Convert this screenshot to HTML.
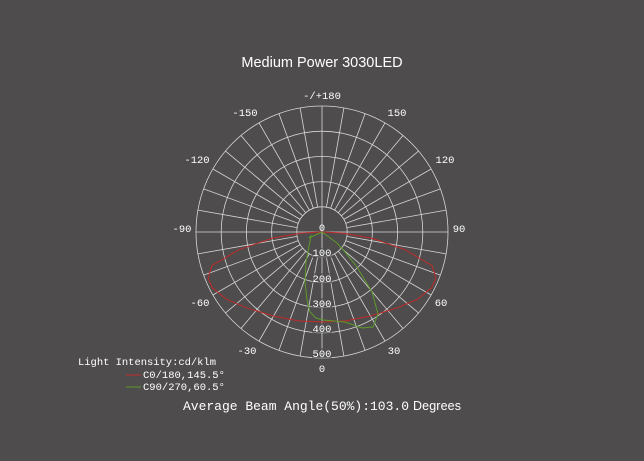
<!DOCTYPE html><html><head><style>
body{margin:0;background:#4e4c4c;width:644px;height:461px;overflow:hidden}
svg{display:block}
.m{font-family:"Liberation Mono",monospace;font-size:10.5px;fill:#fff}
</style></head><body>
<svg id="s" width="644" height="461" xmlns="http://www.w3.org/2000/svg">
<rect width="644" height="461" fill="#4e4c4c"/>
<text x="322" y="67" text-anchor="middle" font-family="Liberation Sans,sans-serif" font-size="14.5" fill="#fff">Medium Power 3030LED</text>
<g id="grid" stroke="#d8d8d8" stroke-width="0.8" fill="none"></g>
<g class="m" text-anchor="middle">
<text x="322" y="99">-/+180</text>
<text x="397" y="116">150</text><text x="245" y="116">-150</text>
<text x="445" y="163">120</text><text x="197" y="163">-120</text>
<text x="459" y="232">90</text><text x="182" y="232">-90</text>
<text x="441" y="306">60</text><text x="200" y="306">-60</text>
<text x="394" y="354">30</text><text x="247" y="354">-30</text>
<text x="322" y="372">0</text>
</g>
<path fill="none" stroke="#c02a2a" stroke-width="1" id="red"/>
<path fill="none" stroke="#5c9a2a" stroke-width="1" d="M322,232 L309,238 L311,236 L306,262 L305,282 L307,300 L310,312 L316,318 L323,320 L345,322 L362,328 L373,327 L378,314 L372,292 L357,267 L345,252 L337,243 L322,232"/>
<g fill="#4e4c4c" opacity="0.6">
<rect x="312" y="248" width="20" height="10"/><rect x="312" y="273" width="20" height="10"/><rect x="312" y="298" width="20" height="10"/><rect x="312" y="323" width="20" height="10"/><rect x="312" y="348" width="20" height="10"/>
</g>
<g class="m" text-anchor="middle">
<text x="322" y="231">0</text><text x="322" y="256">100</text><text x="322" y="282">200</text><text x="322" y="307">300</text><text x="322" y="332">400</text><text x="322" y="357">500</text>
</g>
<text x="78" y="365" class="m" textLength="138">Light Intensity:cd/klm</text>
<line x1="126" y1="375" x2="141" y2="375" stroke="#c02a2a"/>
<text x="143" y="378" class="m">C0/180,145.5°</text>
<line x1="126" y1="387" x2="141" y2="387" stroke="#5c9a2a"/>
<text x="143" y="390" class="m">C90/270,60.5°</text>
<text x="183" y="410" font-family="Liberation Mono,monospace" font-size="13" fill="#fff" textLength="226">Average Beam Angle(50%):103.0</text>
<text x="413" y="410" font-family="Liberation Sans,sans-serif" font-size="12.5" fill="#fff" textLength="48">Degrees</text>
</svg>
<script>
var cx=322,cy=232,g=document.getElementById('grid'),h='';
[25.2,50.4,75.6,100.8,126].forEach(function(r){h+='<circle cx="'+cx+'" cy="'+cy+'" r="'+r+'"/>';});
for(var a=0;a<360;a+=10){var t=a*Math.PI/180,s=Math.sin(t),c=Math.cos(t);
var r0=(a%90==0)?0:25.2;
h+='<line x1="'+(cx+r0*s)+'" y1="'+(cy+r0*c)+'" x2="'+(cx+126*s)+'" y2="'+(cy+126*c)+'"/>';}
g.innerHTML=h;
var pts=[[0,90],[15,92],[30,97],[45,107],[55,117],[63,123],[68,123],[73,115],[78,85],[83,50],[87,20],[90,0]];
var d='';
for(var k=-pts.length+1;k<pts.length;k++){var p=pts[Math.abs(k)],an=(k<0?-p[0]:p[0])*Math.PI/180;
d+=(d?'L':'M')+(cx+p[1]*Math.sin(an)).toFixed(1)+','+(cy+p[1]*Math.cos(an)).toFixed(1);}
document.getElementById('red').setAttribute('d',d);
</script>
</body></html>
